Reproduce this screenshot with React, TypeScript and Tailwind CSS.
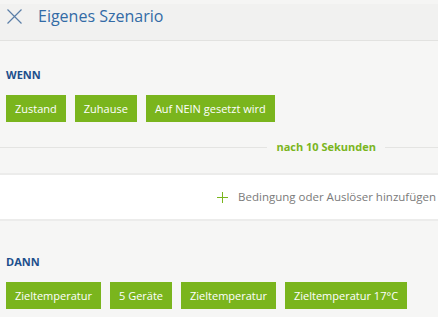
const green = 'bg-[#7ab51d]';

const Chip = ({ label }: { label: string }) => (
  <div className={`${green} shrink-0 whitespace-nowrap text-white text-[11px] leading-[27px] h-[27px] px-[9px]`}>{label}</div>
);

export default function App() {
  return (
    <div className="w-[438px] h-[317px] overflow-hidden bg-[#f6f6f5] font-['Open_Sans',sans-serif]">
      <header className="h-[41px] bg-[#f1f1f0] border-t-[4px] border-t-[#f5f5f4] border-b border-[#e2e2e0] flex items-start pt-[5px] pl-[7px]">
        <svg width="15" height="15" viewBox="0 0 15 15" className="mr-[16px]">
          <path d="M0.5 0.5 L14.5 14.5 M14.5 0.5 L0.5 14.5" stroke="#5b7fa8" strokeWidth="1.2" fill="none" />
        </svg>
        <h1 className="text-[16px] text-[#336ba6] leading-[15px]">Eigenes Szenario</h1>
      </header>

      <section className="px-[6px] pt-[26px]">
        <div className="text-[11px] leading-[15px] font-bold text-[#1d4f8c]">WENN</div>
        <div className="flex gap-[9px] mt-[13px]">
          <Chip label="Zustand" />
          <Chip label="Zuhause" />
          <Chip label="Auf NEIN gesetzt wird" />
        </div>
      </section>

      <div className="flex items-center mt-[17px] h-[16px]">
        <div className="flex-1 h-px bg-[#e4e4e2]" />
        <div className="px-[9px] text-[11px] font-bold text-[#7ab51d] whitespace-nowrap">nach 10 Sekunden</div>
        <div className="w-[53px] h-px bg-[#e4e4e2]" />
      </div>

      <div className="mt-[18px] h-[48px] bg-white border-y-2 border-[#ececeb] flex items-center justify-end pr-[2px]">
        <svg width="11" height="11" viewBox="0 0 11 11" className="mr-[10px]">
          <path d="M5.5 0 V11 M0 5.5 H11" stroke="#7ab51d" strokeWidth="1" fill="none" />
        </svg>
        <span className="text-[11.5px] text-[#7a7a7a] whitespace-nowrap">Bedingung oder Auslöser hinzufügen</span>
      </div>

      <section className="px-[6px] pt-[33px]">
        <div className="text-[11px] leading-[15px] font-bold text-[#1d4f8c]">DANN</div>
        <div className="flex gap-[9px] mt-[13px]">
          <Chip label="Zieltemperatur" />
          <Chip label="5 Geräte" />
          <Chip label="Zieltemperatur" />
          <Chip label="Zieltemperatur 17°C" />
        </div>
      </section>
    </div>
  );
}
